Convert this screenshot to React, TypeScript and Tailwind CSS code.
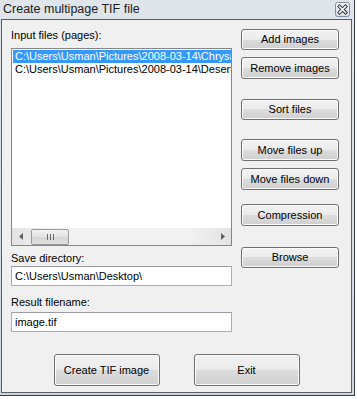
import React from "react";

function Btn({ children, className = "" }: { children: React.ReactNode; className?: string }) {
  return (
    <div
      className={`flex items-center justify-center rounded-[3px] border border-[#707070] bg-[linear-gradient(#f2f2f2_0%,#ebebeb_50%,#dddddd_50%,#cfcfcf_100%)] shadow-[inset_0_0_0_1px_#fbfbfb] text-[11px] text-black leading-none ${className}`}
    >
      {children}
    </div>
  );
}

function Field({ value }: { value: string }) {
  return (
    <div className="flex h-[20px] w-[221px] items-center border border-[#abadb3] border-t-[#9a9da4] bg-white pl-[3px] text-[11px] text-black leading-none">
      {value}
    </div>
  );
}

export default function App() {
  return (
    <div className="h-[399px] w-[357px] bg-white font-['Liberation_Sans',Arial,sans-serif] text-black">
      <div className="flex h-[396px] w-[355px] flex-col border-b border-r border-[#3d3d3d] bg-[linear-gradient(#dfe5eb,#ccd6df)]">
        {/* title bar */}
        <div className="flex h-[19px] shrink-0 items-start justify-between">
          <div className="pl-[3px] pt-[2px] text-[12.5px] leading-[15px] text-[#1a1a1a]">
            Create multipage TIF file
          </div>
          <div className="mr-[4px] mt-[2px]">
            <svg width="15" height="15" viewBox="0 0 15 15">
              <defs>
                <linearGradient id="cb" x1="0" y1="0" x2="0" y2="1">
                  <stop offset="0" stopColor="#f4f7fa" />
                  <stop offset="1" stopColor="#d5dde6" />
                </linearGradient>
              </defs>
              <rect x="0.5" y="0.5" width="14" height="14" rx="2" fill="url(#cb)" stroke="#7f8d9c" />
              <path d="M4.5 4.5 L10.5 10.5 M10.5 4.5 L4.5 10.5" stroke="#2b2b2b" strokeWidth="3.4" strokeLinecap="square" />
              <path d="M4.5 4.5 L10.5 10.5 M10.5 4.5 L4.5 10.5" stroke="#ffffff" strokeWidth="1.6" strokeLinecap="square" />
            </svg>
          </div>
        </div>
        {/* client */}
        <div className="mb-[2px] ml-[1px] mr-[2px] flex flex-1 flex-col border border-[#5e5e5e] bg-[#f0f0f0]">
          <div className="flex pl-[9px] pt-[9px]">
            {/* left column */}
            <div className="flex w-[221px] flex-col">
              <div className="h-[13px] text-[11px] leading-[13px]">Input files (pages):</div>
              <div className="mt-[6px] flex h-[198px] flex-col border border-[#828790] bg-white">
                <div className="flex flex-1 flex-col overflow-hidden pl-[1px] pt-[1px] text-[11px] leading-[13px] whitespace-nowrap">
                  <div className="h-[13px] bg-[#3399ff] pl-[2px] text-white">
                    C:\Users\Usman\Pictures\2008-03-14\Chrysanthemum.jpg
                  </div>
                  <div className="h-[13px] pl-[2px]">C:\Users\Usman\Pictures\2008-03-14\Desert.jpg</div>
                </div>
                {/* scrollbar */}
                <div className="flex h-[17px] items-center bg-[linear-gradient(90deg,#e3e3e3,#f2f2f2_20%,#f2f2f2_80%,#e3e3e3)]">
                  <div className="flex h-[17px] w-[17px] items-center justify-center">
                    <svg width="4" height="7" viewBox="0 0 4 7">
                      <path d="M4 0 L0 3.5 L4 7 Z" fill="#606060" />
                    </svg>
                  </div>
                  <div className="ml-[2px] flex h-[16px] w-[38px] items-center justify-center rounded-[2px] border border-[#9a9a9a] bg-[linear-gradient(#f3f3f3,#e2e2e2_50%,#d6d6d6_50%,#dedede)]">
                    <svg width="7" height="6" viewBox="0 0 7 6">
                      <path d="M0.5 0 V6 M3.5 0 V6 M6.5 0 V6" stroke="#6a6a6a" strokeWidth="1" />
                    </svg>
                  </div>
                  <div className="flex-1" />
                  <div className="flex h-[17px] w-[17px] items-center justify-center">
                    <svg width="4" height="7" viewBox="0 0 4 7">
                      <path d="M0 0 L4 3.5 L0 7 Z" fill="#606060" />
                    </svg>
                  </div>
                </div>
              </div>
              <div className="mt-[6px] h-[13px] text-[11px] leading-[13px]">Save directory:</div>
              <div className="mt-[1px]">
                <Field value="C:\Users\Usman\Desktop\" />
              </div>
              <div className="mt-[10px] h-[13px] text-[11px] leading-[13px]">Result filename:</div>
              <div className="mt-[3px]">
                <Field value="image.tif" />
              </div>
            </div>
            {/* right column */}
            <div className="ml-[9px] flex w-[98px] flex-col">
              <Btn className="h-[21px]">Add images</Btn>
              <Btn className="mt-[7px] h-[22px]">Remove images</Btn>
              <Btn className="mt-[20px] h-[21px]">Sort files</Btn>
              <Btn className="mt-[19px] h-[22px]">Move files up</Btn>
              <Btn className="mt-[7px] h-[22px]">Move files down</Btn>
              <Btn className="mt-[14px] h-[22px]">Compression</Btn>
              <Btn className="mt-[21px] h-[21px]">Browse</Btn>
            </div>
          </div>
          <div className="mt-[22px] flex justify-center gap-[34px]">
            <Btn className="h-[32px] w-[106px]">Create TIF image</Btn>
            <Btn className="h-[32px] w-[106px]">Exit</Btn>
          </div>
        </div>
      </div>
    </div>
  );
}
